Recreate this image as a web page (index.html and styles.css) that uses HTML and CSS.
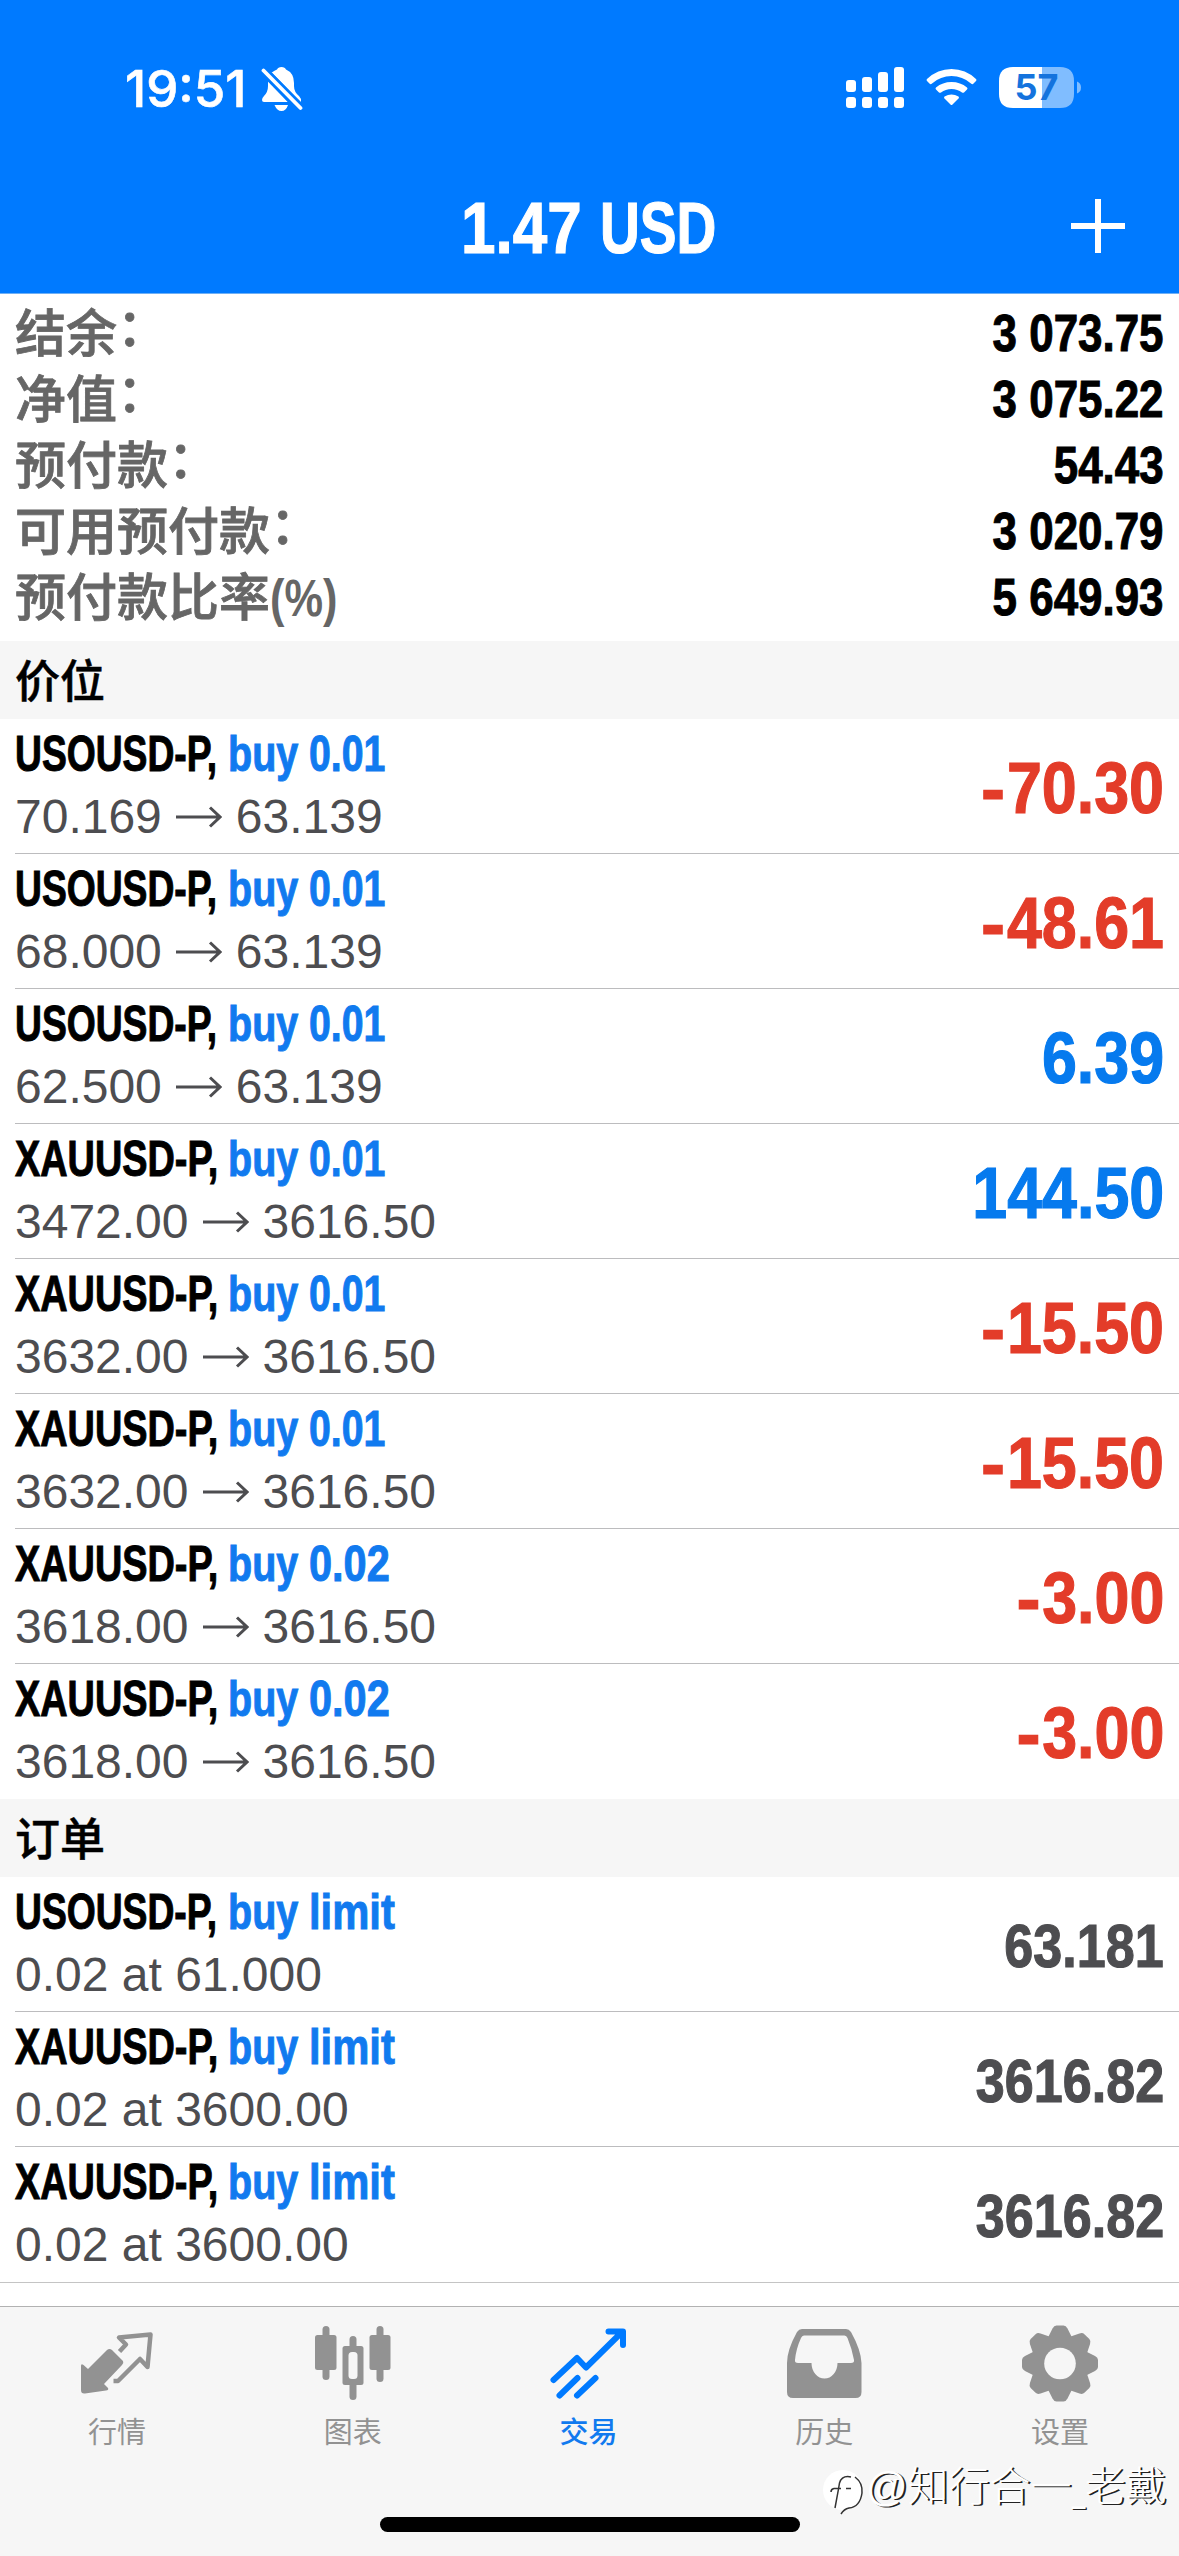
FILE: index.html
```
<!DOCTYPE html>
<html lang="zh-CN">
<head>
<meta charset="utf-8">
<title>交易</title>
<link rel="stylesheet" href="styles.css">
</head>
<body>
<div class="screen">
  <header class="top">
    <div class="status">
      <span class="clock">19:51</span>
      <svg class="bell" width="42" height="46" viewBox="0 0 42 46">
        <path fill="#fff" d="M10 7Q14 4 16 3.500Q17 1 20.500 1T25 3.500Q33 7 33 17V20Q33 26 38 30L40 33V36L11 7ZM7 15L27 36H3Q1 36 1 34Q1 32 3 30Q7 26 7 20ZM13.500 39H27Q25 45 20.500 45T13.500 39Z"/>
        <path fill="none" stroke="#007aff" stroke-width="9" d="M2 4L40 43"/>
        <path fill="none" stroke="#fff" stroke-width="3.800" stroke-linecap="round" d="M2.500 4.500L39.500 42"/>
      </svg>
      <svg class="signals" width="240" height="46" viewBox="0 0 240 46">
        <g fill="#fff">
          <rect x="1" y="14" width="10" height="12" rx="3"/><rect x="17" y="11" width="10" height="15" rx="3"/>
          <rect x="33" y="6" width="10" height="20" rx="3"/><rect x="49" y="1" width="10" height="25" rx="3"/>
          <rect x="1" y="31" width="10" height="11" rx="3"/><rect x="17" y="31" width="10" height="11" rx="3"/>
          <rect x="33" y="31" width="10" height="11" rx="3"/><rect x="49" y="31" width="10" height="11" rx="3"/>
          <path d="M82 13Q92.500 3 106.500 3T131 13Q132 14 131 15L128 18Q127 18.500 126 17.500Q117.500 10 106.500 10T87 17.500Q86 18.500 85 18L82 15Q81 14 82 13Z"/>
          <path d="M91 21.500Q97.500 16 106.500 16T122 21.500Q123 22.500 122 23.500L119 26.500Q118 27 117 26.500Q112.500 23 106.500 23T96 26.500Q95 27 94 26.500L91 23.500Q90 22.500 91 21.500Z"/>
          <path d="M99.500 30.500Q106.500 26.500 113.500 30.500Q114.500 31.500 113.500 32.500L107.500 38.500Q106.500 39.500 105.500 38.500L99.500 32.500Q98.500 31.500 99.500 30.500Z"/>
          <path d="M168 1H197V42H168Q154 42 154 28V15Q154 1 168 1Z"/>
          <path opacity=".5" d="M197 1H215Q229 1 229 15V28Q229 42 215 42H197ZM232 15.500Q236 17 236 21.500T232 27.500Z"/>
        </g>
        <text class="charge" x="191.500" y="34" text-anchor="middle">57</text>
      </svg>
    </div>
    <div class="titlebar">
      <h1 class="total"><span class="amount">1.47</span><span class="currency">USD</span></h1>
      <svg class="plus" width="54" height="54" viewBox="0 0 54 54"><path fill="#fff" d="M24 0H30V24H54V30H30V54H24V30H0V24H24Z"/></svg>
    </div>
  </header>

  <section class="account">
    <div class="line"><span class="label">结余<span class="colon">：</span></span><span class="num">3 073.75</span></div>
    <div class="line"><span class="label">净值<span class="colon">：</span></span><span class="num">3 075.22</span></div>
    <div class="line"><span class="label">预付款<span class="colon">：</span></span><span class="num">54.43</span></div>
    <div class="line"><span class="label">可用预付款<span class="colon">：</span></span><span class="num">3 020.79</span></div>
    <div class="line"><span class="label">预付款比率<span class="pct">(%)</span></span><span class="num">5 649.93</span></div>
  </section>

  <svg width="0" height="0" class="defs"><symbol id="arrow" viewBox="0 0 46 22"><path fill="none" stroke="#4d4d50" stroke-width="3" d="M0 11H44M34 1.500L44 11L34 20.500"/></symbol></svg>

  <h2 class="section">价位</h2>
  <div class="list">
    <div class="row"><div class="info"><div class="name"><span class="sym">USOUSD-P,</span><span class="side">buy</span><span class="vol">0.01</span></div><div class="prices">70.169<svg class="arrow"><use href="#arrow"/></svg>63.139</div></div><span class="profit loss"><span class="minus">-</span>70.30</span></div>
    <div class="row"><div class="info"><div class="name"><span class="sym">USOUSD-P,</span><span class="side">buy</span><span class="vol">0.01</span></div><div class="prices">68.000<svg class="arrow"><use href="#arrow"/></svg>63.139</div></div><span class="profit loss"><span class="minus">-</span>48.61</span></div>
    <div class="row"><div class="info"><div class="name"><span class="sym">USOUSD-P,</span><span class="side">buy</span><span class="vol">0.01</span></div><div class="prices">62.500<svg class="arrow"><use href="#arrow"/></svg>63.139</div></div><span class="profit">6.39</span></div>
    <div class="row"><div class="info"><div class="name"><span class="sym xau">XAUUSD-P,</span><span class="side">buy</span><span class="vol">0.01</span></div><div class="prices">3472.00<svg class="arrow"><use href="#arrow"/></svg>3616.50</div></div><span class="profit">144.50</span></div>
    <div class="row"><div class="info"><div class="name"><span class="sym xau">XAUUSD-P,</span><span class="side">buy</span><span class="vol">0.01</span></div><div class="prices">3632.00<svg class="arrow"><use href="#arrow"/></svg>3616.50</div></div><span class="profit loss"><span class="minus">-</span>15.50</span></div>
    <div class="row"><div class="info"><div class="name"><span class="sym xau">XAUUSD-P,</span><span class="side">buy</span><span class="vol">0.01</span></div><div class="prices">3632.00<svg class="arrow"><use href="#arrow"/></svg>3616.50</div></div><span class="profit loss"><span class="minus">-</span>15.50</span></div>
    <div class="row"><div class="info"><div class="name"><span class="sym xau">XAUUSD-P,</span><span class="side">buy</span><span class="vol wide">0.02</span></div><div class="prices">3618.00<svg class="arrow"><use href="#arrow"/></svg>3616.50</div></div><span class="profit loss"><span class="minus">-</span>3.00</span></div>
    <div class="row last"><div class="info"><div class="name"><span class="sym xau">XAUUSD-P,</span><span class="side">buy</span><span class="vol wide">0.02</span></div><div class="prices">3618.00<svg class="arrow"><use href="#arrow"/></svg>3616.50</div></div><span class="profit loss"><span class="minus">-</span>3.00</span></div>
  </div>

  <h2 class="section">订单</h2>
  <div class="list orders">
    <div class="row"><div class="info"><div class="name"><span class="sym">USOUSD-P,</span><span class="side">buy</span><span class="kind">limit</span></div><div class="prices">0.02 at 61.000</div></div><span class="price">63.181</span></div>
    <div class="row"><div class="info"><div class="name"><span class="sym xau">XAUUSD-P,</span><span class="side">buy</span><span class="kind">limit</span></div><div class="prices">0.02 at 3600.00</div></div><span class="price">3616.82</span></div>
    <div class="row last"><div class="info"><div class="name"><span class="sym xau">XAUUSD-P,</span><span class="side">buy</span><span class="kind">limit</span></div><div class="prices">0.02 at 3600.00</div></div><span class="price">3616.82</span></div>
  </div>

  <nav class="tabs">
    <a class="tab"><svg width="80" height="80" viewBox="0 0 80 80">
      <path fill="#929292" d="M4 43Q4 40 6.500 42L11 46L30 27Q32.500 25 35 27L46 38Q47 40 45 42L27 61L31 65Q32 67 29 67.500L8 70.500Q4 71 4 67Z"/>
      <path fill="none" stroke="#929292" stroke-width="4.500" stroke-linejoin="round" d="M42.500 28.500L49 21.500L42 14.500L73.500 11.500L70.500 44L63 36L41 58H36.500"/>
    </svg><span>行情</span></a>
    <a class="tab"><svg width="80" height="80" viewBox="0 0 80 80" fill="#929292">
      <rect x="9.500" y="3" width="7" height="54" rx="3.500"/><rect x="2" y="12" width="21.500" height="35" rx="2.500"/>
      <rect x="36.500" y="13" width="7" height="64" rx="3.500"/><rect x="29.500" y="23" width="21" height="39" rx="2.500"/><rect x="35.500" y="29" width="9" height="27" rx="3.500" fill="#f6f6f6"/>
      <rect x="63.500" y="3" width="7" height="56" rx="3.500"/><rect x="56.500" y="12" width="21" height="35" rx="2.500"/>
    </svg><span>图表</span></a>
    <a class="tab active"><svg width="80" height="80" viewBox="0 0 80 80">
      <path fill="none" stroke="#007aff" stroke-width="6" stroke-linecap="round" stroke-linejoin="round" d="M5.500 57L29 35L38 44.500L72 11M60.500 8.500H75V22M11.500 72.500L29.500 55M29 72.500L47.500 55"/>
      <path fill="#007aff" d="M65 8H75.500V18Z"/>
    </svg><span>交易</span></a>
    <a class="tab"><svg width="80" height="80" viewBox="0 0 80 80">
      <path fill="#929292" fill-rule="evenodd" d="M18 6H62Q65 6 67 9Q77 27 77.500 40V69Q77.500 75 71.500 75H9Q3 75 3 69V40Q3 27 13 9Q15 6 18 6ZM20 12.500Q18 12.500 17 15Q12 26 11 37Q10.500 40 14 40H27.500A13 15.500 0 0 0 53.500 40H67Q70.500 40 70 37Q68 26 63.500 15Q62.500 12.500 60.500 12.500Z"/>
    </svg><span>历史</span></a>
    <a class="tab"><svg width="80" height="80" viewBox="-40 -40.500 80 80">
      <g fill="#929292"><path id="tooth" d="M-12 -26L-7.500 -35Q-6 -38 -3.500 -38H3.500Q6 -38 7.500 -35L12 -26V0H-12Z"/>
      <use href="#tooth" transform="rotate(45)"/><use href="#tooth" transform="rotate(90)"/><use href="#tooth" transform="rotate(135)"/><use href="#tooth" transform="rotate(180)"/><use href="#tooth" transform="rotate(225)"/><use href="#tooth" transform="rotate(270)"/><use href="#tooth" transform="rotate(315)"/></g>
      <circle r="15.800" fill="#f6f6f6"/>
    </svg><span>设置</span></a>
    <div class="watermark">
      <svg width="46" height="50" viewBox="0 0 46 50"><circle cx="21" cy="25" r="20" fill="#fff"/><path fill="none" stroke="#333" stroke-width="1.500" d="M29 12Q20 10 17.500 18L16.500 24L13 43M9 27Q9 24 12 23.500H19M24 23.500H29M33 12Q41 18 40 28Q38 42 27 43Q22 44 19 49"/></svg>
      <span class="handle">@知行合一<span class="dash">_</span>老戴</span>
    </div>
    <div class="home"></div>
  </nav>
</div>
</body>
</html>
```
FILE: styles.css
```
* { box-sizing: border-box; }
body { margin: 0; background: #fff; font-family: "Liberation Sans", "Noto Sans CJK SC", sans-serif; }
.screen { width: 1179px; height: 2556px; display: flex; flex-direction: column; overflow: hidden; }
.defs { display: none; }

.top { height: 294px; flex: none; background: #007aff; border-bottom: 1px solid #6fb0f5; color: #fff; }
.status { height: 133px; padding: 66px 94px 0 125px; display: flex; }
.clock { width: 136px; font: 500 51px/46px Inter, sans-serif; letter-spacing: 0; white-space: nowrap; -webkit-text-stroke: 0.6px; }
.signals { margin-left: auto; }
.charge { font: 700 36px Inter, sans-serif; fill: #1473dd; }
.titlebar { height: 160px; position: relative; }
.total { margin: 0; padding-left: 461px; display: flex; font-size: 73px; line-height: 84px; padding-top: 53px; -webkit-text-stroke: 1.2px; }
.total span { transform-origin: 0 50%; white-space: nowrap; }
.amount { width: 139px; transform: scaleX(.85); }
.currency { transform: scaleX(.755); }
.plus { position: absolute; left: 1071px; top: 66px; }

.account { height: 347px; flex: none; padding: 7px 15px 0 15px; }
.line { height: 66px; display: flex; justify-content: space-between; align-items: flex-start; }
.label { height: 66px; margin-top: -4px; font: 500 51px/66px "Noto Sans CJK SC", sans-serif; color: #666; white-space: nowrap; -webkit-text-stroke: 0.8px; }
.colon { line-height: 1; vertical-align: 6px; }
.pct { display: inline-block; font: 700 51px/60px "Liberation Sans", sans-serif; transform: scaleX(.85); transform-origin: 0 50%; -webkit-text-stroke: 0; }
.num { font-weight: 700; font-size: 51px; line-height: 66px; transform: scaleX(.861); transform-origin: 100% 50%; -webkit-text-stroke: 1px; }

.section { margin: 0; height: 78px; flex: none; padding-left: 15px; background: #f6f6f6; font: 500 45px/76px "Noto Sans CJK SC", sans-serif; color: #000; -webkit-text-stroke: 0.5px; }
.row { height: 135px; margin-left: 15px; padding-right: 15px; border-bottom: 1px solid #bcbcbe; display: flex; justify-content: space-between; }
.list .row.last { border-bottom: 0; }
.orders .row.last { height: 136px; margin-left: 0; padding-left: 15px; border-bottom: 1px solid #c4c4c4; }
.info { padding-top: 5px; }
.name { display: flex; height: 60px; font-weight: 700; font-size: 50px; line-height: 60px; -webkit-text-stroke: 1px; }
.name span { flex: none; white-space: nowrap; transform-origin: 0 50%; }
.sym { width: 213px; transform: scaleX(.745); color: #000; }
.xau { transform: scaleX(.757); }
.side { width: 81px; transform: scaleX(.79); color: #117aef; }
.vol { transform: scaleX(.785); color: #117aef; }
.wide { transform: scaleX(.83); }
.kind { transform: scaleX(.835); color: #117aef; }
.prices { display: flex; align-items: center; height: 62px; padding-top: 4px; font-size: 48px; line-height: 62px; color: #4d4d50; white-space: pre; }
.arrow { width: 46px; height: 22px; margin: 0 14px 0 14px; }
.profit, .price { font-weight: 700; line-height: 134px; transform-origin: 100% 50%; padding-top: 2px; -webkit-text-stroke: 1.2px; }
.profit { font-size: 73px; transform: scaleX(.86); color: #067aee; }
.loss { color: #e33c29; }
.minus { display: inline-block; transform: scaleX(1.15); transform-origin: 100% 50%; margin-right: 2px; }
.price { font-size: 62px; transform: scaleX(.84); color: #4d4d50; }

.tabs { position: relative; height: 250px; flex: none; margin-top: auto; border-top: 1px solid #b2b2b2; background: #f6f6f6; display: flex; }
.tab { flex: 1; padding: 16px 2px 0 0; display: flex; flex-direction: column; align-items: center; font: 400 29px/40px "Noto Sans CJK SC", sans-serif; color: #929292; }
.tab span { margin-top: 7px; }
.active { color: #117aef; font-weight: 500; }
.watermark { position: absolute; left: 822px; top: 158px; display: flex; color: #fff; white-space: nowrap; }
.handle { margin-left: -2px; font: 300 41px/44px "Liberation Sans", "Noto Sans CJK SC", sans-serif; text-shadow: 2px 1px 0 #222; }
.dash { display: inline-block; width: 13px; transform: scaleX(.58); transform-origin: 0 50%; }
.home { position: absolute; left: 380px; top: 210px; width: 420px; height: 15px; border-radius: 8px; background: #000; }
```
